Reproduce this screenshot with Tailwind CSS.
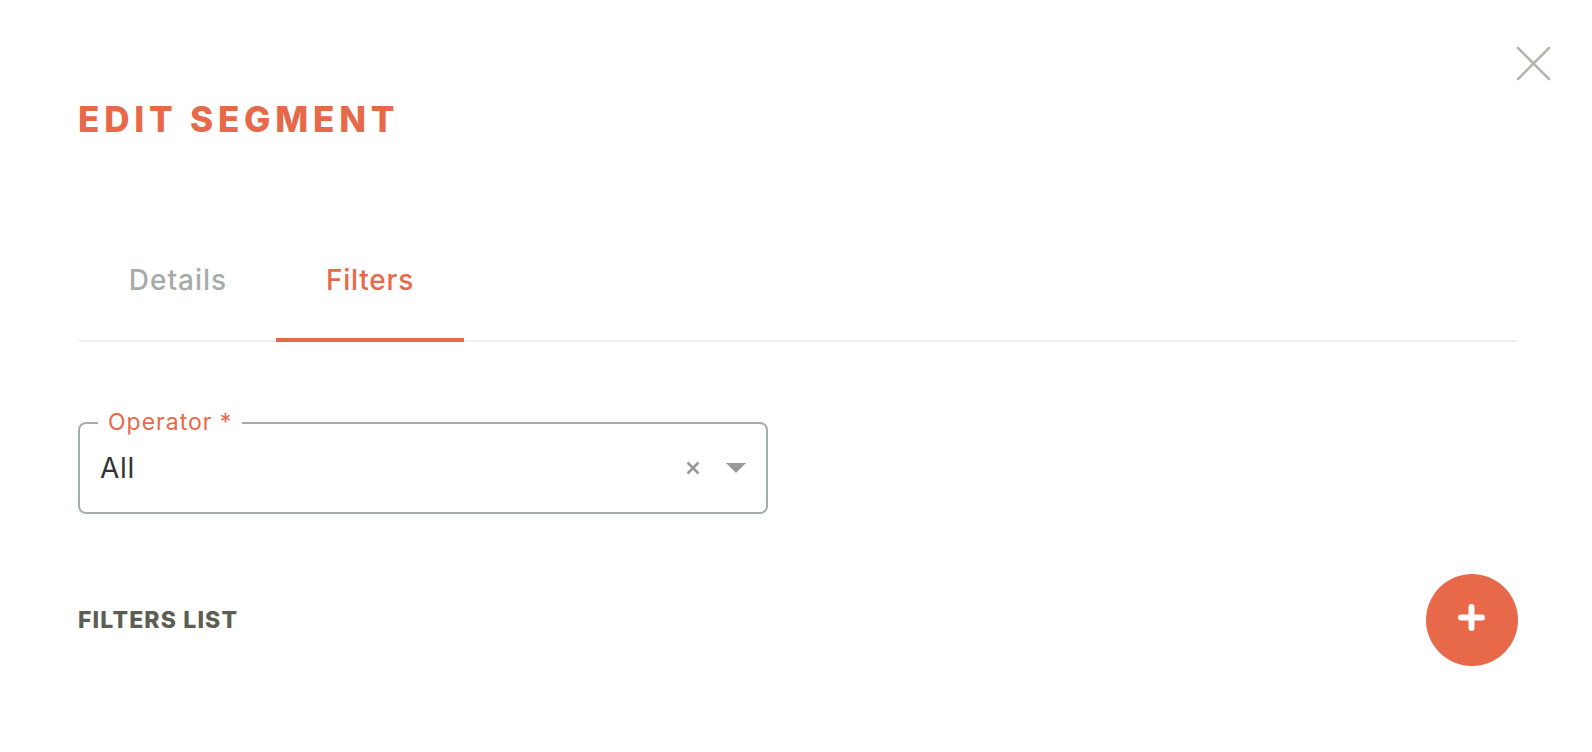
<!DOCTYPE html>
<html lang="en">
<head>
    <meta charset="UTF-8">
    <meta name="viewport" content="width=device-width, initial-scale=1.0">
    <title>Edit Segment</title>
    <script src="https://cdn.jsdelivr.net/npm/@tailwindcss/browser@4"></script>
</head>
<body class="bg-white font-['Inter',sans-serif] h-[752px] overflow-hidden">
    <div class="relative pl-[78px] pr-[74px] pt-[99px]">
        <button class="absolute left-[1516px] top-[46px] w-[35px] h-[35px] text-[#b0b5b0]">
            <svg viewBox="0 0 35 35" class="w-[35px] h-[35px]" fill="none" stroke="currentColor" stroke-width="2.5" stroke-linecap="round"><path d="M2 2L33 33M33 2L2 33"/></svg>
        </button>

        <h1 class="text-[#e7694a] text-[35px] leading-10 font-extrabold tracking-[4.8px]">EDIT SEGMENT</h1>

        <div class="flex mt-[99px] border-b-2 border-[#f0f0f0] h-[104px]">
            <div class="w-[198px] h-[104px] flex justify-center pt-6 pl-[2px] text-[28px] leading-9 font-medium tracking-[1px] text-[#a5acaa]">Details</div>
            <div class="w-[188px] h-[104px] flex justify-center pt-6 text-[28px] leading-9 font-medium tracking-[0.8px] text-[#e7694a] border-b-4 border-[#e7694a]">Filters</div>
        </div>

        <div class="relative mt-20 w-[690px] h-[92px] border-2 border-[#a5acaa] rounded-lg flex items-center pl-5 pr-5">
            <span class="absolute left-[18px] top-[-14px] bg-white px-[10px] text-[23px] leading-6 tracking-[1px] text-[#e7694a]">Operator *</span>
            <span class="text-[#333333] text-[28px] leading-9 tracking-[0.7px] flex-1">All</span>
            <svg viewBox="0 0 14 14" class="w-[14px] h-[14px] mr-[26px]" fill="none" stroke="#999999" stroke-width="2.6"><path d="M1.5 1.5L12.5 12.5M12.5 1.5L1.5 12.5"/></svg>
            <svg viewBox="0 0 20 10" class="w-5 h-[10px]" fill="#999999"><path d="M0 0H20L10 10Z"/></svg>
        </div>

        <div class="flex items-center justify-between mt-[60px]">
            <h2 class="text-[#5c5e54] text-[23px] font-extrabold leading-7 tracking-[1.15px]">FILTERS LIST</h2>
            <button class="w-[92px] h-[92px] rounded-full bg-[#e7694a] flex items-center justify-center">
                <svg viewBox="0 0 27 27" class="w-[27px] h-[27px] mb-[6px] mr-[2px]" fill="none" stroke="#ffffff" stroke-width="6" stroke-linecap="round"><path d="M13.5 3V24M3 13.5H24"/></svg>
            </button>
        </div>
    </div>
</body>
</html>
